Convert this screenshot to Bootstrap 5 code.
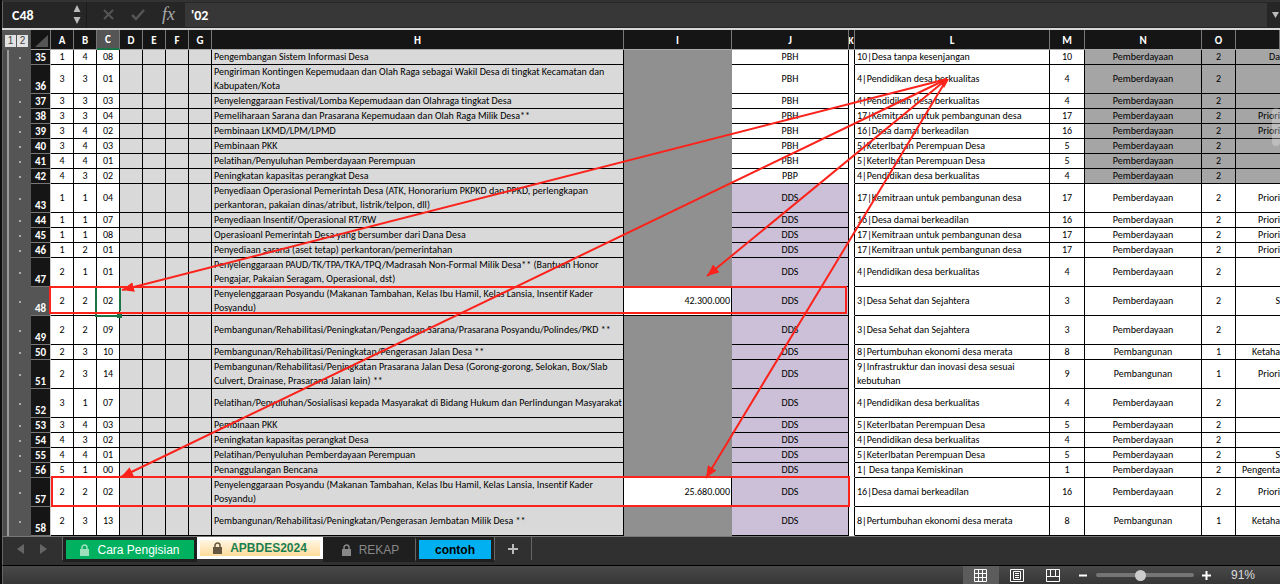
<!DOCTYPE html>
<html lang="id">
<head>
<meta charset="utf-8">
<meta name="viewport" content="width=device-width, initial-scale=1">
<title>APBDES2024</title>
<link href="https://cdn.jsdelivr.net/npm/bootstrap@5.3.0/dist/css/bootstrap.min.css" rel="stylesheet">
<script src="https://cdn.jsdelivr.net/npm/bootstrap@5.3.0/dist/js/bootstrap.bundle.min.js"></script>
<style>
body{font:10px/14px Carlito,Calibri,Lato,"Liberation Sans",sans-serif;font-variant-ligatures:none;color:#000;background:#262626}
button{color:inherit}
.app-window{border-left:2px solid #0b0b0b}
.formula-bar{height:28px;background:#262626;border-top:2px solid #333;border-left:1px solid #666;color:#fff;font-size:14px}
.name-box{width:58px;padding:0 0 0 9px;background:transparent;border:0;color:#fff;font-weight:700}
.name-area{width:84px;border-right:1px solid #1b1b1b}
.bare-btn{border:0;padding:0;background:transparent;line-height:0;display:block}
.formula-tools{padding:0 7px 0 16px}
.formula-input{min-width:0;height:24px;background:#373737;border:0;color:#fff;padding:0 6px;font-weight:700;font-size:14px}
.sheet-area{border-top:2px solid #d8d8d8}
.grid-sheet{table-layout:fixed;border-collapse:separate;border-spacing:0;background:#fff}
.grid-sheet th,.grid-sheet td{padding:0;overflow:hidden}
.grid-sheet thead th{height:20px;background:#151515;color:#fff;text-align:center;border-right:1px solid #777;border-bottom:1px solid #aaa;font-weight:700;font-size:11px;padding-top:2px}
.grid-sheet thead .narrow-col{font-size:10px;text-indent:-1px}
.grid-sheet td{border-right:1px solid #000;border-bottom:1px solid #000;text-align:center;vertical-align:middle}
.grid-sheet tbody tr{height:15px}
.grid-sheet tbody tr.tall{height:29px}
.grid-sheet tbody .outline,.grid-sheet thead .outline{background:#555;border:0}
.grid-sheet tbody .outline{border-left:1px solid #666;box-shadow:inset 4px 0 #4a4a4a,inset 6px 0 #999}
.dot{width:2px;height:2px;background:#aaa;margin-left:16px}
.level-pair{gap:1px}
.level-btn{width:11px;height:12px;padding:0;border:0;background:#e2e2e2;color:#444;font:10px/12px "Liberation Sans",sans-serif}
.grid-sheet tbody th{background:#151515;color:#fff;text-align:center;vertical-align:bottom;border-bottom:1px solid #777;border-right:1px solid #ccc;font-weight:700;font-size:11px;line-height:12px}
.grid-sheet thead .is-active,.grid-sheet tbody th.is-active{background:#555}
.grid-sheet thead .is-active{border-bottom:2px solid #1a7446}
.grid-sheet .g{background:#d9d9d9}
.grid-sheet .desc{background:#d9d9d9;text-align:left;padding-left:2px;white-space:nowrap}
.grid-sheet .mask{background:#909090;border-color:#909090}
.grid-sheet .money{text-align:right;padding-right:1px}
.grid-sheet .dds{background:#ccc0d8}
.grid-sheet .gap{border-bottom-color:#fff}
.grid-sheet .goal{text-align:left;padding-left:2px;white-space:nowrap}
.grid-sheet .dim{background:#a5a5a5}
.grid-sheet .cut{text-align:right;border-right:0;white-space:nowrap}
.notes{left:0;top:0;pointer-events:none}
.scroll-thumb{right:0;top:78px;width:8px;height:38px;border-radius:4px;background:#fff4}
.tab-strip{height:30px;background:#303030;border-top:1px solid #777;border-left:1px solid #666;border-bottom:1px solid #000;font:12px/16px "Liberation Sans",sans-serif}
.tab-nav{width:60px;padding-left:14px;color:#777;border-right:1px solid #666;height:23px}
.sheet-tab{height:25px;padding:0;border:3px solid #1f1f1f;border-radius:0;font:12px/16px "Liberation Sans",sans-serif}
.tab-guide{width:134px;background:#00b160;color:#fff}
.tab-current{width:126px;height:22px;border-color:#fff;background:linear-gradient(#fff6e3,#ffdc9c);color:#1a7f50;font-weight:700}
.tab-recap{width:93px;background:#1f1f1f;color:#888;border-right:1px solid #666}
.tab-sample{width:78px;background:#00b0f0;color:#000;font-weight:700}
.tab-add{width:38px;height:23px;border-right:1px solid #666;border-left:1px solid #666}
.status-bar{height:18px;background:linear-gradient(#494949,#363636);border-left:1px solid #666;color:#ddd;font:12px/18px "Liberation Sans",sans-serif;padding-right:25px}
.view-btn{width:36px;height:18px}
.view-btn.on{background:#5c5c5c}
.zoom-in{margin-right:20px}
.zoom-range{appearance:none;-webkit-appearance:none;width:98px;height:4px;border-radius:2px;background:#757575;margin:0}
.zoom-range::-webkit-slider-thumb{-webkit-appearance:none;width:11px;height:11px;border-radius:50%;background:#ccc}
</style>
</head>
<body>
<div class="app-window d-flex flex-column min-vh-100 overflow-hidden">
  <div class="formula-bar d-flex align-items-center">
    <div class="name-area d-flex align-items-center h-100">
      <input class="name-box" aria-label="Kotak nama" value="C48">
      <button class="bare-btn ms-auto me-1" aria-label="Pilih nama"><svg width="10" height="20" fill="#bbb"><path d="M1.500 7 5 0l3.500 7zM1.500 12 5 19l3.500-7z"/></svg></button>
    </div>
    <div class="formula-tools d-flex align-items-center gap-3">
      <button class="bare-btn" aria-label="Batal"><svg width="12" height="12" stroke="#555" stroke-width="2"><path d="m1 1 9 9M10 1 1 10"/></svg></button>
      <button class="bare-btn" aria-label="Terima"><svg width="14" height="12" fill="none" stroke="#555" stroke-width="2.500"><path d="m1 6 4 4 8-9"/></svg></button>
      <button class="bare-btn" aria-label="Sisipkan fungsi"><svg width="17" height="20"><text x="1" y="15" fill="#aaa" font-family="Liberation Serif,serif" font-style="italic" font-size="18">fx</text></svg></button>
    </div>
    <input class="formula-input flex-fill" aria-label="Rumus" value="'02">
    <button class="bare-btn ms-1" aria-label="Perluas rumus"><svg width="9" height="8" fill="#bbb"><path d="M1 1h7L4.500 7z"/></svg></button>
  </div>
  <div class="sheet-area position-relative overflow-hidden">
    <table class="grid-sheet w-100">
      <colgroup><col width="29"><col width="20"><col width="23"><col width="23"><col width="23"><col width="23"><col width="23"><col width="23"><col width="23"><col width="412"><col width="108"><col width="117"><col width="6"><col width="195"><col width="35"><col width="117"><col width="34"><col></colgroup>
      <thead><tr>
        <th class="outline"><div class="level-pair d-flex justify-content-center"><button class="level-btn">1</button><button class="level-btn">2</button></div></th>
        <th><svg class="d-block ms-1" width="13" height="12" fill="#555"><path d="M13 0v12H0z"/></svg></th>
        <th>A</th><th>B</th><th class="is-active">C</th><th>D</th><th>E</th><th>F</th><th>G</th><th>H</th><th>I</th><th>J</th><th class="narrow-col">K</th><th>L</th><th>M</th><th>N</th><th>O</th><th></th>
      </tr></thead>
      <tbody id="rows"></tbody>
    </table>
    <svg class="notes position-absolute w-100 h-100" fill="none" stroke="#fb231b" stroke-width="2">
      <defs><marker id="tip" markerUnits="userSpaceOnUse" markerWidth="14" markerHeight="12" refX="12" refY="5" orient="auto"><path d="M0 0 12 5 0 10z" fill="#fb231b" stroke="none"/></marker></defs>
      <path d="M94 257v28M118 257v24M93 286h22" stroke="#1a7446"/><path d="M115 283h5v5h-5z" fill="#1a7446" stroke="none"/>
      <path d="M945 49 120 260" marker-end="url(#tip)"/><path d="M945 49 119 447" marker-end="url(#tip)"/>
      <path d="M945 49 705 246" marker-end="url(#tip)"/><path d="M945 49 704 448" marker-end="url(#tip)"/>
      <path d="M937 51 947 49 942 58z" fill="#fb231b" stroke="none"/>
      <rect x="48" y="257" width="796" height="26"/><rect x="50" y="447" width="797" height="29"/>
    </svg>
    <div class="scroll-thumb position-absolute"></div>
  </div>
  <div class="tab-strip d-flex align-items-start">
    <div class="tab-nav d-flex align-items-center gap-3 flex-shrink-0">
      <button class="bare-btn" aria-label="Lembar sebelumnya"><svg width="7" height="10" fill="#666"><path d="M7 0v10L0 5z"/></svg></button>
      <button class="bare-btn" aria-label="Lembar berikutnya"><svg width="7" height="10" fill="#666"><path d="M0 0v10l7-5z"/></svg></button>
    </div>
    <button class="sheet-tab tab-guide d-flex align-items-center justify-content-center gap-2"><svg width="9" height="12" fill="#9be0bd"><path d="M0 5h9v7H0z"/><path d="M2 6V3.500a2.500 2.500 0 0 1 5 0V6" fill="none" stroke="#9be0bd" stroke-width="1.500"/></svg>Cara Pengisian</button>
    <button class="sheet-tab tab-current d-flex align-items-center justify-content-center gap-2"><svg width="9" height="12" fill="#665840"><path d="M0 5h9v7H0z"/><path d="M2 6V3.500a2.500 2.500 0 0 1 5 0V6" fill="none" stroke="#665840" stroke-width="1.500"/></svg>APBDES2024</button>
    <button class="sheet-tab tab-recap d-flex align-items-center justify-content-center gap-2"><svg width="9" height="12" fill="#888"><path d="M0 5h9v7H0z"/><path d="M2 6V3.500a2.500 2.500 0 0 1 5 0V6" fill="none" stroke="#888" stroke-width="1.500"/></svg>REKAP</button>
    <button class="sheet-tab tab-sample">contoh</button>
    <button class="bare-btn tab-add d-flex align-items-center justify-content-center" aria-label="Tambah lembar"><svg width="10" height="10" stroke="#bbb" stroke-width="2"><path d="M5 0v10M0 5h10"/></svg></button>
  </div>
  <div class="status-bar d-flex align-items-center justify-content-end">
    <button class="bare-btn view-btn on d-flex align-items-center justify-content-center" aria-label="Normal"><svg width="13" height="13" fill="none" stroke="#fff"><path d="M.5.5h12v12H.5zM4.500.5v12M8.500.5v12M.5 4.500h12M.5 8.500h12"/></svg></button>
    <button class="bare-btn view-btn d-flex align-items-center justify-content-center" aria-label="Tata letak halaman"><svg width="14" height="13" fill="none" stroke="#fff"><path d="M.5.5h13v12H.5zM3.500 2.500h7v8h-7zM5 4.500h4M5 6.500h4M5 8.500h4"/></svg></button>
    <button class="bare-btn view-btn d-flex align-items-center justify-content-center" aria-label="Hentian halaman"><svg width="14" height="13" fill="none" stroke="#fff"><path d="M.5.5h13v12H.5zM4.500.5v7h5v-7M9.500 7.500h4M.5 7.500h4"/></svg></button>
    <button class="bare-btn ms-2" aria-label="Perkecil"><svg width="9" height="9" stroke="#fff" stroke-width="2"><path d="M0 4.500h8"/></svg></button>
    <input class="zoom-range mx-2" type="range" min="0" max="100" value="45" aria-label="Zoom">
    <button class="bare-btn zoom-in" aria-label="Perbesar"><svg width="9" height="9" stroke="#fff" stroke-width="2"><path d="M0 4.500h9M4.500 0v9"/></svg></button>
    <span>91%</span>
  </div>
</div>
<script>
const P = "Pemberdayaan", B = "Pembangunan";
// row number, A, B, C, description, amount, source, goal, goal number, field, field number, programme, two-line height
const rows = [
[35,1,4,"08","Pengembangan Sistem Informasi Desa","","PBH","10|Desa tanpa kesenjangan",10,P,2,"Da",0],
[36,3,3,"01","Pengiriman Kontingen Kepemudaan dan Olah Raga sebagai Wakil Desa di tingkat Kecamatan dan<br>Kabupaten/Kota","","PBH","4|Pendidikan desa berkualitas",4,P,2,"",1],
[37,3,3,"03","Penyelenggaraan Festival/Lomba Kepemudaan dan Olahraga tingkat Desa","","PBH","4|Pendidikan desa berkualitas",4,P,2,"",0],
[38,3,3,"04","Pemeliharaan Sarana dan Prasarana Kepemudaan dan Olah Raga Milik Desa**","","PBH","17|Kemitraan untuk pembangunan desa",17,P,2,"Priori",0],
[39,3,4,"02","Pembinaan LKMD/LPM/LPMD","","PBH","16|Desa damai berkeadilan",16,P,2,"Priori",0],
[40,3,4,"03","Pembinaan PKK","","PBH","5|Keterlbatan Perempuan Desa",5,P,2,"",0],
[41,4,4,"01","Pelatihan/Penyuluhan Pemberdayaan Perempuan","","PBH","5|Keterlbatan Perempuan Desa",5,P,2,"",0],
[42,4,3,"02","Peningkatan kapasitas perangkat Desa","","PBP","4|Pendidikan desa berkualitas",4,P,2,"",0],
[43,1,1,"04","Penyediaan Operasional Pemerintah Desa (ATK, Honorarium PKPKD dan PPKD, perlengkapan<br>perkantoran, pakaian dinas/atribut, listrik/telpon, dll)","","DDS","17|Kemitraan untuk pembangunan desa",17,P,2,"Priori",1],
[44,1,1,"07","Penyediaan Insentif/Operasional RT/RW","","DDS","16|Desa damai berkeadilan",16,P,2,"Priori",0],
[45,1,1,"08","Operasioanl Pemerintah Desa yang bersumber dari Dana Desa","","DDS","17|Kemitraan untuk pembangunan desa",17,P,2,"Priori",0],
[46,1,2,"01","Penyediaan sarana (aset tetap) perkantoran/pemerintahan","","DDS","17|Kemitraan untuk pembangunan desa",17,P,2,"Priori",0],
[47,2,1,"01","Penyelenggaraan PAUD/TK/TPA/TKA/TPQ/Madrasah Non-Formal Milik Desa** (Bantuan Honor<br>Pengajar, Pakaian Seragam, Operasional, dst)","","DDS","4|Pendidikan desa berkualitas",4,P,2,"",1],
[48,2,2,"02","Penyelenggaraan Posyandu (Makanan Tambahan, Kelas Ibu Hamil, Kelas Lansia, Insentif Kader<br>Posyandu)","42.300.000","DDS","3|Desa Sehat dan Sejahtera",3,P,2,"S",1],
[49,2,2,"09","Pembangunan/Rehabilitasi/Peningkatan/Pengadaan Sarana/Prasarana Posyandu/Polindes/PKD **","","DDS","3|Desa Sehat dan Sejahtera",3,P,2,"",1],
[50,2,3,"10","Pembangunan/Rehabilitasi/Peningkatan/Pengerasan Jalan Desa **","","DDS","8|Pertumbuhan ekonomi desa merata",8,B,1,"Ketaha",0],
[51,2,3,"14","Pembangunan/Rehabilitasi/Peningkatan Prasarana Jalan Desa (Gorong-gorong, Selokan, Box/Slab<br>Culvert, Drainase, Prasarana Jalan lain) **","","DDS","9|Infrastruktur dan inovasi desa sesuai<br>kebutuhan",9,B,1,"Priori",1],
[52,3,1,"07","Pelatihan/Penyuluhan/Sosialisasi kepada Masyarakat di Bidang Hukum dan Perlindungan Masyarakat","","DDS","4|Pendidikan desa berkualitas",4,P,2,"",1],
[53,3,4,"03","Pembinaan PKK","","DDS","5|Keterlbatan Perempuan Desa",5,P,2,"",0],
[54,4,3,"02","Peningkatan kapasitas perangkat Desa","","DDS","4|Pendidikan desa berkualitas",4,P,2,"",0],
[55,4,4,"01","Pelatihan/Penyuluhan Pemberdayaan Perempuan","","DDS","5|Keterlbatan Perempuan Desa",5,P,2,"S",0],
[56,5,1,"00","Penanggulangan Bencana","","DDS","1| Desa tanpa Kemiskinan",1,P,2,"Pengenta",0],
[57,2,2,"02","Penyelenggaraan Posyandu (Makanan Tambahan, Kelas Ibu Hamil, Kelas Lansia, Insentif Kader<br>Posyandu)","25.680.000","DDS","16|Desa damai berkeadilan",16,P,2,"Priori",1],
[58,2,3,"13","Pembangunan/Rehabilitasi/Peningkatan/Pengerasan Jembatan Milik Desa **","","DDS","8|Pertumbuhan ekonomi desa merata",8,B,1,"Ketaha",1]];
document.getElementById("rows").innerHTML = rows.map(([n,a,b,c,d,amt,src,goal,gn,f,fn,p,tall]) => {
  const dim = n < 43 ? "dim" : "";
  return `<tr class="${tall ? "tall" : ""}"><td class="outline"><div class="dot"></div></td><th class="${n === 48 ? "is-active" : ""}">${n}</th><td>${a}</td><td>${b}</td><td>${c}</td><td class="g"></td><td class="g"></td><td class="g"></td><td class="g"></td><td class="desc">${d}</td><td class="${amt ? "money" : "mask"}">${amt}</td><td class="${src === "DDS" ? "dds" : ""}">${src}</td><td class="gap"></td><td class="goal">${goal}</td><td>${gn}</td><td class="${dim}">${f}</td><td class="${dim}">${fn}</td><td class="cut ${dim}">${p}</td></tr>`;
}).join("");
</script>
</body>
</html>
